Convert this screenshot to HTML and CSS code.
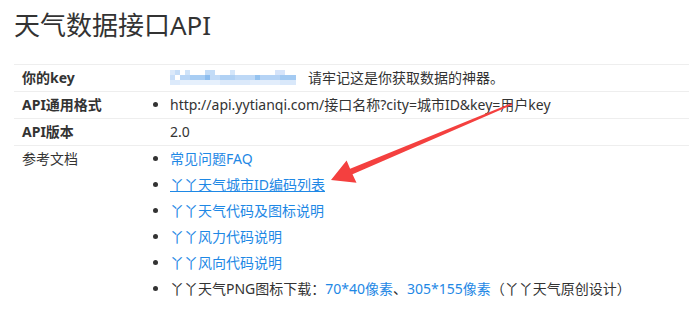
FILE: index.html
```html
<!DOCTYPE html>
<html lang="zh-CN">
<head>
  <meta charset="UTF-8">
  <meta name="viewport" content="width=device-width, initial-scale=1.0">
  <title>天气数据接口API</title>
  <link rel="stylesheet" href="styles.css">
</head>
<body>
  <div class="container">
    <h1>天气数据接口API</h1>
    <table class="api-table">
      <tr>
        <th>你的key</th>
        <td>
          <svg class="key-blur" width="126" height="16" viewBox="0 0 126 16">
            <!-- pixelated key -->
            <rect x="0" y="0" width="5" height="5" fill="#dbe9fa"/>
            <rect x="5" y="0" width="5" height="5" fill="#c6ddf7"/>
            <rect x="15" y="0" width="5" height="5" fill="#cfe3f9"/>
            <rect x="35" y="0" width="10" height="5" fill="#c3dcf7"/>
            <rect x="60" y="0" width="5" height="5" fill="#d4e6fa"/>
            <rect x="105" y="0" width="10" height="5" fill="#d6e4fa"/>
            <rect x="0" y="5" width="5" height="5" fill="#c8def8"/>
            <rect x="10" y="5" width="10" height="5" fill="#b9d6f6"/>
            <rect x="20" y="5" width="15" height="5" fill="#a8cdf3"/>
            <rect x="35" y="5" width="5" height="5" fill="#8cbdef"/>
            <rect x="40" y="5" width="10" height="5" fill="#c2dbf7"/>
            <rect x="50" y="5" width="15" height="5" fill="#b0d1f4"/>
            <rect x="65" y="5" width="20" height="5" fill="#bdd8f6"/>
            <rect x="85" y="5" width="5" height="5" fill="#95c3f0"/>
            <rect x="90" y="5" width="20" height="5" fill="#b5d3f5"/>
            <rect x="110" y="5" width="16" height="5" fill="#a3caf2"/>
            <rect x="0" y="10" width="10" height="5" fill="#dceafb"/>
            <rect x="10" y="10" width="40" height="5" fill="#e6f0fc"/>
            <rect x="50" y="10" width="30" height="5" fill="#dbe9fa"/>
            <rect x="80" y="10" width="30" height="5" fill="#e2edfb"/>
            <rect x="110" y="10" width="16" height="5" fill="#d9e8fa"/>
          </svg><span>请牢记这是你获取数据的神器。</span>
        </td>
      </tr>
      <tr>
        <th>API通用格式</th>
        <td>
          <ul>
            <li>http://api.yytianqi.com/接口名称?city=城市ID&amp;key=用户key</li>
          </ul>
        </td>
      </tr>
      <tr>
        <th>API版本</th>
        <td>2.0</td>
      </tr>
      <tr>
        <th class="plain">参考文档</th>
        <td>
          <ul class="docs">
            <li><a href="#">常见问题FAQ</a></li>
            <li><a href="#" class="hover">丫丫天气城市ID编码列表</a></li>
            <li><a href="#">丫丫天气代码及图标说明</a></li>
            <li><a href="#">丫丫风力代码说明</a></li>
            <li><a href="#">丫丫风向代码说明</a></li>
            <li>丫丫天气PNG图标下载：<a href="#">70*40像素</a>、<a href="#">305*155像素</a>（丫丫天气原创设计）</li>
          </ul>
        </td>
      </tr>
    </table>
  </div>

  <svg class="arrow" width="689" height="323" viewBox="0 0 689 323">
    <polygon points="331,180 346.6,160.5 350.1,168.7 511.6,103.2 512.4,104.8 352.5,174.3 356.5,182.8" fill="#f4403f"/>
  </svg>
</body>
</html>
```

FILE: styles.css
```css
/* Base */
body {
  margin: 0;
  position: relative;
  background: #fff;
  color: #333;
  font-family: "Noto Sans", "Noto Sans CJK SC", sans-serif;
  font-size: 14px;
}

.container {
  padding-left: 14px;
}

h1 {
  margin: 5px 0 19px;
  font-size: 26px;
  font-weight: 400;
  line-height: 40px;
  font-family: "Noto Sans", "Noto Sans CJK SC", sans-serif;
}

/* Table */
.api-table {
  width: 675px;
  border-collapse: collapse;
  table-layout: fixed;
}

.api-table th,
.api-table td {
  border-top: 1px solid #eee;
  padding: 3px 8px;
  line-height: 20px;
  text-align: left;
  vertical-align: top;
}

.api-table th {
  width: 132px;
  font-weight: 700;
}

.api-table th.plain {
  font-weight: 400;
}

.api-table ul {
  margin: 0;
  padding: 0;
}

.api-table li {
  line-height: 20px;
}

.docs li {
  line-height: 26px;
}

.docs li:first-child {
  line-height: 20px;
  margin-bottom: 3px;
}

.key-blur {
  vertical-align: -3px;
  margin-right: 12px;
}

a {
  color: #1e88e5;
  text-decoration: none;
}

a.hover {
  text-decoration: underline;
}

/* Annotation arrow */
.arrow {
  position: absolute;
  left: 0;
  top: 0;
  pointer-events: none;
}
```
